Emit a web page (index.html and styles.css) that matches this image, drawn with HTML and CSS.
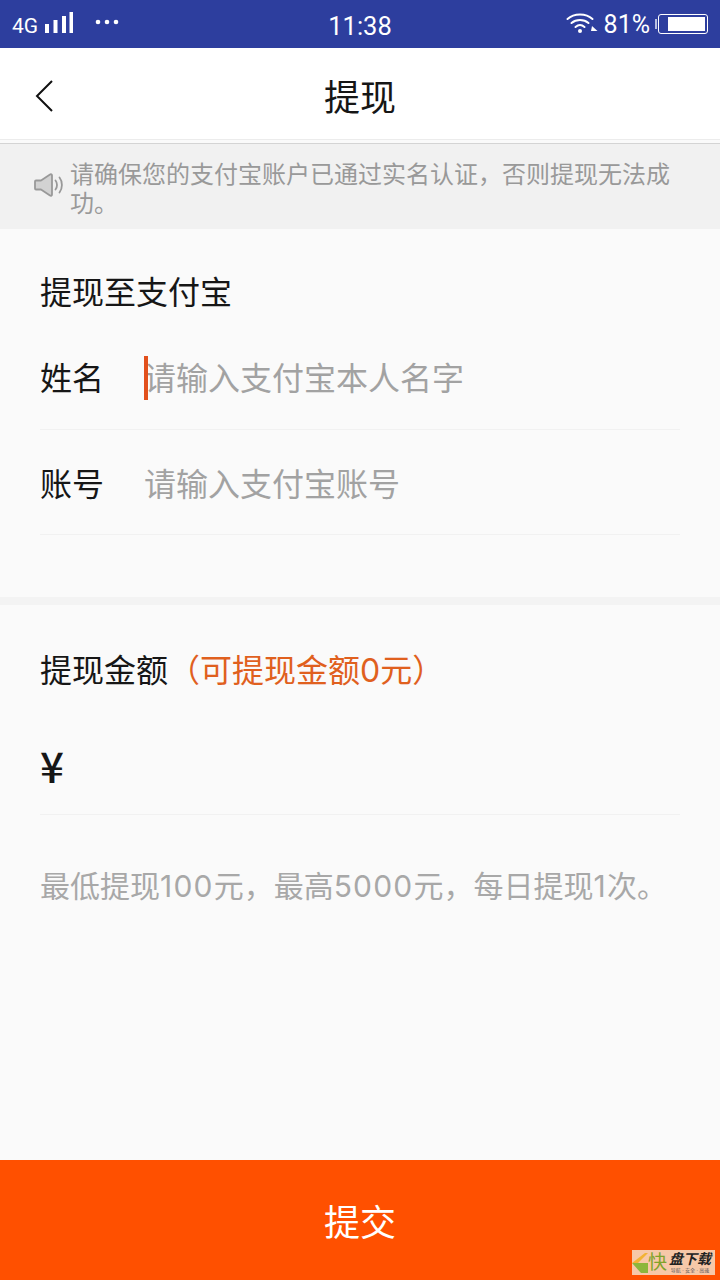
FILE: index.html
```html
<!DOCTYPE html>
<html lang="zh-CN">
<head>
    <meta charset="UTF-8">
    <meta name="viewport" content="width=device-width, initial-scale=1.0">
    <title>提现</title>
    <link rel="stylesheet" href="styles.css">
</head>
<body>
    <div class="status-bar">
        <div class="status-left">
            <span class="network">4G</span>
            <svg class="signal" width="30" height="24" viewBox="0 0 30 24"><path d="M1 13h4v9H1zM9.500 9h4v13h-4zM18 5h4v17h-4zM25.500 1h3.500v21h-3.500z" fill="#fff"/></svg>
            <svg class="dots" width="24" height="6" viewBox="0 0 24 6"><circle cx="3" cy="3" r="2.300" fill="#fff"/><circle cx="12" cy="3" r="2.300" fill="#fff"/><circle cx="21" cy="3" r="2.300" fill="#fff"/></svg>
        </div>
        <span class="clock">11:38</span>
        <div class="status-right">
            <svg class="wifi" width="32" height="22" viewBox="0 0 32 22"><g fill="none" stroke="#fff" stroke-width="2" stroke-linecap="round"><path d="M1.500 7C8 1 20 1 26.500 7"/><path d="M5.500 11c4.700-4 12.300-4 17 0"/><path d="M9.500 15c2.700-2.300 6.300-2.300 9 0"/></g><circle cx="14" cy="19" r="2" fill="#fff"/><path d="M26 14l5.500 5H25z" fill="#fff"/></svg>
            <span class="battery-text">81%</span>
            <span class="battery-cap"></span>
            <span class="battery"><span class="battery-level"></span></span>
        </div>
    </div>

    <header class="nav">
        <svg class="back" width="20" height="34" viewBox="0 0 20 34"><path d="M18 2 3 17l15 15" fill="none" stroke="#111" stroke-width="2"/></svg>
        <h1>提现</h1>
    </header>

    <div class="notice">
        <svg class="notice-icon" width="30" height="26" viewBox="0 0 30 26"><path d="M2 8.500h5L16 2.500c1-.6 2 0 2 1v19c0 1-1 1.600-2 1l-9-6H2c-.7 0-1-.4-1-1v-7c0-.6.300-1 1-1z" fill="#d2d2d2" stroke="#999" stroke-width="1.800" stroke-linejoin="round"/><path d="M21.500 8.500c2 2.500 2 6.500 0 9M25.500 5.500c3.200 4 3.200 11 0 15" fill="none" stroke="#999" stroke-width="1.800" stroke-linecap="round"/></svg>
        <p>请确保您的支付宝账户已通过实名认证，否则提现无法成功。</p>
    </div>

    <section class="account">
        <h2>提现至支付宝</h2>
        <div class="field first">
            <span class="field-label">姓名</span>
            <span class="placeholder with-caret">请输入支付宝本人名字</span>
        </div>
        <div class="field">
            <span class="field-label">账号</span>
            <span class="placeholder">请输入支付宝账号</span>
        </div>
    </section>

    <section class="amount">
        <h2>提现金额<em>（可提现金额0元）</em></h2>
        <div class="amount-input">¥</div>
        <p class="hint">最低提现<span class="num">100</span>元，最高<span class="num">5000</span>元，每日提现<span class="num">1</span>次。</p>
    </section>

    <button class="submit">提交</button>

    <div class="watermark">
        <svg class="wm-logo" width="16" height="20" viewBox="0 0 16 20"><path d="M0 10 13 0h3L6 10z" fill="#f2b233"/><path d="M0 10h16v10H9z" fill="#8cb63c"/></svg>
        <span class="wm-kuai">快</span>
        <span class="wm-right"><b>盘下载</b><small>导航 · 安全 · 高速</small></span>
    </div>
</body>
</html>
```

FILE: styles.css
```css
* {
    box-sizing: border-box;
}

html, body {
    margin: 0;
    padding: 0;
}

body {
    position: relative;
    width: 720px;
    height: 1280px;
    overflow: hidden;
    display: flex;
    flex-direction: column;
    background-color: #fafafa;
    color: #161616;
    font-family: 'Inter', 'Noto Sans CJK SC', sans-serif;
}

h1, h2, p {
    margin: 0;
    font-weight: 400;
}

.status-bar {
    height: 48px;
    flex: none;
    display: grid;
    grid-template-columns: 1fr auto 1fr;
    align-items: center;
    padding: 0 12px;
    background-color: #2d3e9e;
    color: #fff;
    font-family: 'Roboto', sans-serif;
}

.status-left {
    display: flex;
    align-items: center;
}

.network {
    font-size: 21px;
    margin-top: 4px;
}

.signal {
    margin-left: 6px;
    margin-bottom: 2px;
}

.dots {
    margin-left: 21px;
    margin-bottom: 4px;
}

.clock {
    font-size: 25.500px;
    margin-top: 3px;
}

.status-right {
    display: flex;
    align-items: center;
    justify-content: flex-end;
}

.wifi {
    margin-bottom: 3px;
}

.battery-text {
    font-size: 25px;
    margin-left: 6px;
    margin-right: 5px;
}

.battery-cap {
    width: 2px;
    height: 10px;
    background-color: #b9c0e0;
}

.battery {
    width: 50px;
    height: 20px;
    margin-left: 1px;
    display: flex;
    justify-content: flex-end;
    padding: 2px;
    border: 1px solid #fff;
    border-radius: 3px;
}

.battery-level {
    width: 37px;
    background-color: #fff;
}

.nav {
    height: 92px;
    flex: none;
    position: relative;
    display: flex;
    align-items: center;
    justify-content: center;
    background-color: #fff;
    border-bottom: 1px solid #ececec;
}

.nav h1 {
    font-size: 36px;
    line-height: 84px;
    padding-top: 8px;
}

.back {
    position: absolute;
    left: 34px;
    top: 31px;
}

.notice {
    height: 86px;
    flex: none;
    position: relative;
    padding: 16px 40px 0 70px;
    margin-top: 3px;
    background-color: #f1f1f1;
    border-top: 1px solid #d4d4d4;
}

.notice p {
    font-size: 24px;
    line-height: 29px;
    color: #999;
}

.notice-icon {
    position: absolute;
    left: 34px;
    top: 28px;
}

.account {
    height: 376px;
    flex: none;
    padding: 41px 40px 0;
    border-bottom: 8px solid #f3f3f3;
}

h2 {
    font-size: 32px;
    line-height: 46px;
}

.field {
    height: 105px;
    display: flex;
    align-items: center;
    border-bottom: 1px solid #f1f1f1;
    font-size: 32px;
}

.field.first {
    height: 114px;
    padding-top: 7px;
}

.field-label {
    width: 104px;
    flex: none;
}

.placeholder {
    color: #a2a2a2;
}

.with-caret {
    position: relative;
}

.with-caret::before {
    content: "";
    position: absolute;
    left: 0;
    top: 3px;
    width: 4px;
    height: 44px;
    background-color: #e2501c;
}

.amount {
    flex: 1;
    padding: 43px 40px 0;
}

.amount em {
    font-style: normal;
    color: #e0601e;
}

.amount-input {
    height: 99px;
    margin-top: 22px;
    padding-top: 21px;
    border-bottom: 1px solid #f1f1f1;
    font-size: 42px;
    font-weight: 500;
    line-height: 56px;
    font-family: 'Noto Sans CJK SC', sans-serif;
}

.hint {
    margin-top: 49px;
    font-size: 30px;
    line-height: 44px;
    color: #a8a8a8;
}

.num {
    letter-spacing: 1.200px;
}

.submit {
    height: 120px;
    flex: none;
    width: 100%;
    border: none;
    padding: 0;
    background-color: #ff5000;
    color: #fff;
    font-family: inherit;
    font-size: 36px;
}

.watermark {
    position: absolute;
    right: 5px;
    bottom: 5px;
    width: 83px;
    height: 25px;
    display: flex;
    align-items: center;
    background-color: #f7c8a8;
}

.wm-logo {
    flex: none;
}

.wm-kuai {
    font-size: 19px;
    line-height: 25px;
    color: #7fa32a;
}

.wm-right {
    display: flex;
    flex-direction: column;
    align-items: center;
    margin-left: 2px;
    color: #222;
}

.wm-right b {
    font-size: 14px;
    line-height: 16px;
    font-style: italic;
}

.wm-right small {
    font-size: 5px;
    line-height: 7px;
    color: #555;
    white-space: nowrap;
}
```
